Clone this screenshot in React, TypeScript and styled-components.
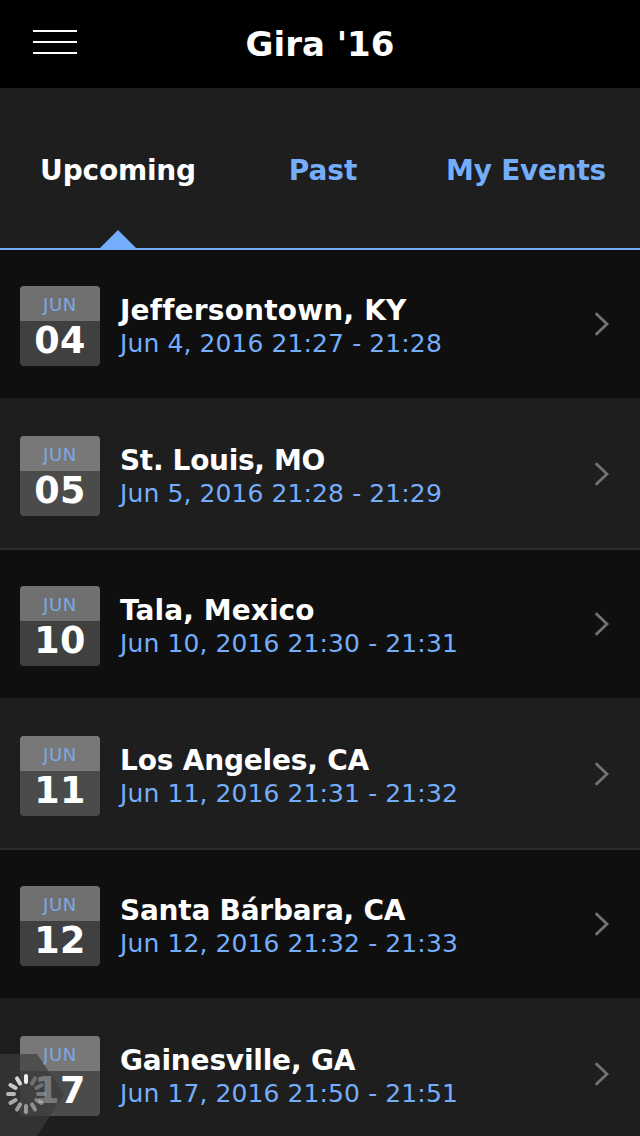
import React from 'react';
import styled, { createGlobalStyle } from 'styled-components';

const BLUE = '#74aefb';

const GlobalStyle = createGlobalStyle`
  * { box-sizing: border-box; }
  html, body { margin: 0; padding: 0; background: #1e1e1e; }
  body {
    font-family: Verdana, 'DejaVu Sans', sans-serif;
    overflow: hidden;
  }
`;

const Screen = styled.div`
  width: 640px;
  height: 1136px;
  overflow: hidden;
  position: relative;
  background: #1e1e1e;
  color: #fff;
`;

const Header = styled.header`
  height: 88px;
  background: #000;
  display: grid;
  grid-template-columns: 110px 1fr 110px;
  align-items: center;
`;

const MenuButton = styled.div`
  display: flex;
  flex-direction: column;
  gap: 9px;
  width: 44px;
  margin: 0 0 4px 33px;
`;

const MenuLine = styled.span`
  height: 2px;
  background: #fff;
`;

const Title = styled.h1`
  margin: 0;
  font-size: 34px;
  line-height: 40px;
  font-weight: 700;
  text-align: center;
  white-space: nowrap;
`;

const Tabs = styled.nav`
  height: 162px;
  border-bottom: 2px solid ${BLUE};
  display: grid;
  grid-template-columns: 236px 174px 230px;
`;

const Tab = styled.div<{ $active?: boolean; $spacing: number; $indent?: number }>`
  display: flex;
  flex-direction: column;
  align-items: center;
  justify-content: space-between;
  padding-top: 65px;
  padding-left: ${(p) => p.$indent ?? 0}px;
  font-size: 28px;
  line-height: 36px;
  font-weight: 700;
  white-space: nowrap;
  letter-spacing: ${(p) => p.$spacing}px;
  color: ${(p) => (p.$active ? '#fff' : BLUE)};
`;

const Pointer = styled.span`
  width: 0;
  height: 0;
  border: 18px solid transparent;
  border-top-width: 0;
  border-bottom-color: ${BLUE};
`;

const Row = styled.article<{ $dark: boolean }>`
  height: 150px;
  display: flex;
  align-items: flex-start;
  padding: 36px 30px 0 20px;
  background: ${(p) => (p.$dark ? '#0f0f0f' : '#1e1e1e')};
  border-bottom: 2px solid ${(p) => (p.$dark ? '#1e1e1e' : '#2b2b2b')};
`;

const DateBadge = styled.div<{ $dark: boolean }>`
  width: 80px;
  height: 80px;
  border-radius: 4px;
  overflow: hidden;
  text-align: center;
  background: ${(p) => (p.$dark ? '#404040' : '#4b4b4b')};
`;

const Month = styled.div<{ $dark: boolean }>`
  height: 35px;
  line-height: 37px;
  font-size: 18px;
  letter-spacing: 0.7px;
  color: #7ba9e4;
  background: ${(p) => (p.$dark ? '#707070' : '#787878')};
`;

const Day = styled.div`
  font-size: 36.5px;
  line-height: 39px;
  font-weight: 700;
  letter-spacing: 0.4px;
`;

const Info = styled.div`
  flex: 1;
  margin-left: 20px;
  padding-top: 7px;
  white-space: nowrap;
`;

const Place = styled.div<{ $spacing: number }>`
  font-size: 28px;
  line-height: 36px;
  font-weight: 700;
  letter-spacing: ${(p) => p.$spacing}px;
`;

const Time = styled.div`
  font-size: 25px;
  line-height: 30px;
  color: ${BLUE};
  letter-spacing: 0.1px;
`;

const Chevron = styled.svg`
  width: 16px;
  height: 26px;
  margin-top: 25px;
`;

const Loader = styled.svg`
  position: absolute;
  left: 0;
  bottom: 0;
  width: 64px;
  height: 82px;
`;

const events = [
  { day: '04', place: 'Jeffersontown, KY', time: 'Jun 4, 2016 21:27 - 21:28', spacing: 0.2 },
  { day: '05', place: 'St. Louis, MO', time: 'Jun 5, 2016 21:28 - 21:29', spacing: -0.33 },
  { day: '10', place: 'Tala, Mexico', time: 'Jun 10, 2016 21:30 - 21:31', spacing: 0.08 },
  { day: '11', place: 'Los Angeles, CA', time: 'Jun 11, 2016 21:31 - 21:32', spacing: -0.2 },
  { day: '12', place: 'Santa Bárbara, CA', time: 'Jun 12, 2016 21:32 - 21:33', spacing: -0.24 },
  { day: '17', place: 'Gainesville, GA', time: 'Jun 17, 2016 21:50 - 21:51', spacing: -0.2 },
];

const spokes = [0.92, 0.25, 0.25, 0.3, 0.36, 0.42, 0.47, 0.52, 0.58, 0.66, 0.74, 0.8];

export default function App() {
  return (
    <Screen>
      <GlobalStyle />
      <Header>
        <MenuButton>
          <MenuLine />
          <MenuLine />
          <MenuLine />
        </MenuButton>
        <Title>Gira '16</Title>
      </Header>
      <Tabs>
        <Tab $active $spacing={-0.2}>
          <span>Upcoming</span>
          <Pointer />
        </Tab>
        <Tab $spacing={0}>
          <span>Past</span>
        </Tab>
        <Tab $spacing={-0.25} $indent={2}>
          <span>My Events</span>
        </Tab>
      </Tabs>
      {events.map((e, i) => {
        const dark = i % 2 === 0;
        return (
          <Row key={e.day} $dark={dark}>
            <DateBadge $dark={dark}>
              <Month $dark={dark}>JUN</Month>
              <Day>{e.day}</Day>
            </DateBadge>
            <Info>
              <Place $spacing={e.spacing}>{e.place}</Place>
              <Time>{e.time}</Time>
            </Info>
            <Chevron viewBox="0 0 16 26">
              <path d="M1.7 2.3 L13 13 L1.7 23.7" fill="none" stroke="#727272" strokeWidth="2.8" />
            </Chevron>
          </Row>
        );
      })}
      <Loader viewBox="0 0 64 82">
        <path d="M0 0H37L64 40L37 82H0Z" fill="#3c3c3c" fillOpacity="0.69" />
        {spokes.map((o, i) => (
          <line
            key={i}
            x1="26"
            x2="26"
            y1="22"
            y2="28"
            stroke="#fff"
            strokeOpacity={o}
            strokeWidth="4"
            strokeLinecap="round"
            transform={`rotate(${i * 30} 26 40)`}
          />
        ))}
      </Loader>
    </Screen>
  );
}
